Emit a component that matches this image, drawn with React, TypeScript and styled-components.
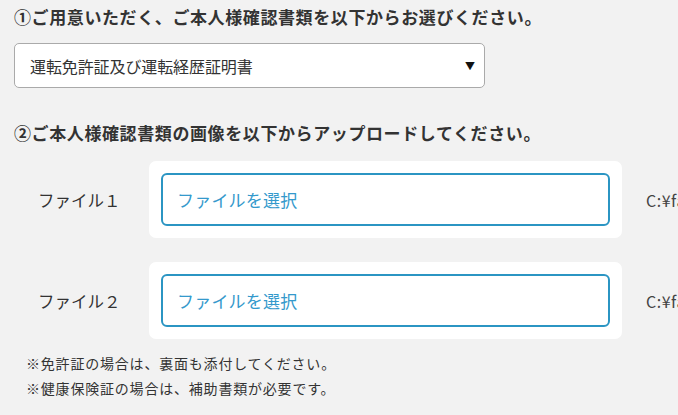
import React from "react";
import styled, { createGlobalStyle } from "styled-components";

const Global = createGlobalStyle`
  html, body {
    margin: 0;
    padding: 0;
    background: #f2f2f2;
    overflow: hidden;
  }
  body {
    font-family: "Noto Sans CJK JP", "Noto Sans", sans-serif;
    color: #333;
  }
  * { box-sizing: border-box; }
`;

const Page = styled.div`
  width: 678px;
  height: 415px;
  padding: 7px 0 0 14px;
  overflow: hidden;
`;

const Heading = styled.h2<{ $top: number }>`
  margin: ${(p) => p.$top}px 0 0;
  font-size: 17px;
  line-height: 20px;
  font-weight: 700;
  letter-spacing: 0.6px;
  color: #333;
  white-space: nowrap;
`;

const Select = styled.div`
  margin-top: 16px;
  width: 471px;
  height: 45px;
  background: #fff;
  border: 1px solid #aaa;
  border-radius: 5px;
  display: flex;
  align-items: center;
  justify-content: space-between;
  padding: 0 9px 0 15px;
  font-size: 16px;
  letter-spacing: -0.1px;
  color: #333;
`;

const Arrow = styled.span`
  font-size: 10px;
  color: #111;
  line-height: 1;
`;

const FileList = styled.div`
  margin-top: 18px;
  display: flex;
  flex-direction: column;
  gap: 24px;
`;

const FileRow = styled.div`
  display: flex;
  align-items: center;
  white-space: nowrap;
`;

const Label = styled.div`
  width: 135px;
  flex-shrink: 0;
  padding-left: 24px;
  font-size: 16.5px;
  color: #333;
`;

const Card = styled.div`
  width: 473px;
  height: 77px;
  background: #fff;
  border-radius: 7px;
  padding: 12px;
  flex-shrink: 0;
`;

const FileButton = styled.div`
  height: 53px;
  border: 2px solid #2b95c3;
  border-radius: 6px;
  display: flex;
  align-items: center;
  padding-left: 14px;
  font-size: 17px;
  letter-spacing: 0.2px;
  color: #3499cc;
  background: #fff;
`;

const Path = styled.div`
  flex: 1;
  min-width: 0;
  overflow: hidden;
  margin-left: 24px;
  font-size: 16px;
  color: #444;
  letter-spacing: 0.5px;
`;

const Notes = styled.div`
  margin-top: 12px;
  padding-left: 12px;
  font-size: 14px;
  letter-spacing: 0.8px;
  line-height: 25px;
  color: #333;
`;

const files = ["ファイル１", "ファイル２"];

export default function App() {
  return (
    <>
      <Global />
      <Page>
        <Heading $top={0}>①ご用意いただく、ご本人様確認書類を以下からお選びください。</Heading>
        <Select>
          <span>運転免許証及び運転経歴証明書</span>
          <Arrow>▼</Arrow>
        </Select>
        <Heading $top={35}>②ご本人様確認書類の画像を以下からアップロードしてください。</Heading>
        <FileList>
          {files.map((f) => (
            <FileRow key={f}>
              <Label>{f}</Label>
              <Card>
                <FileButton>ファイルを選択</FileButton>
              </Card>
              <Path>C:¥fakepath¥image.jpg</Path>
            </FileRow>
          ))}
        </FileList>
        <Notes>
          <div>※免許証の場合は、裏面も添付してください。</div>
          <div>※健康保険証の場合は、補助書類が必要です。</div>
        </Notes>
      </Page>
    </>
  );
}
